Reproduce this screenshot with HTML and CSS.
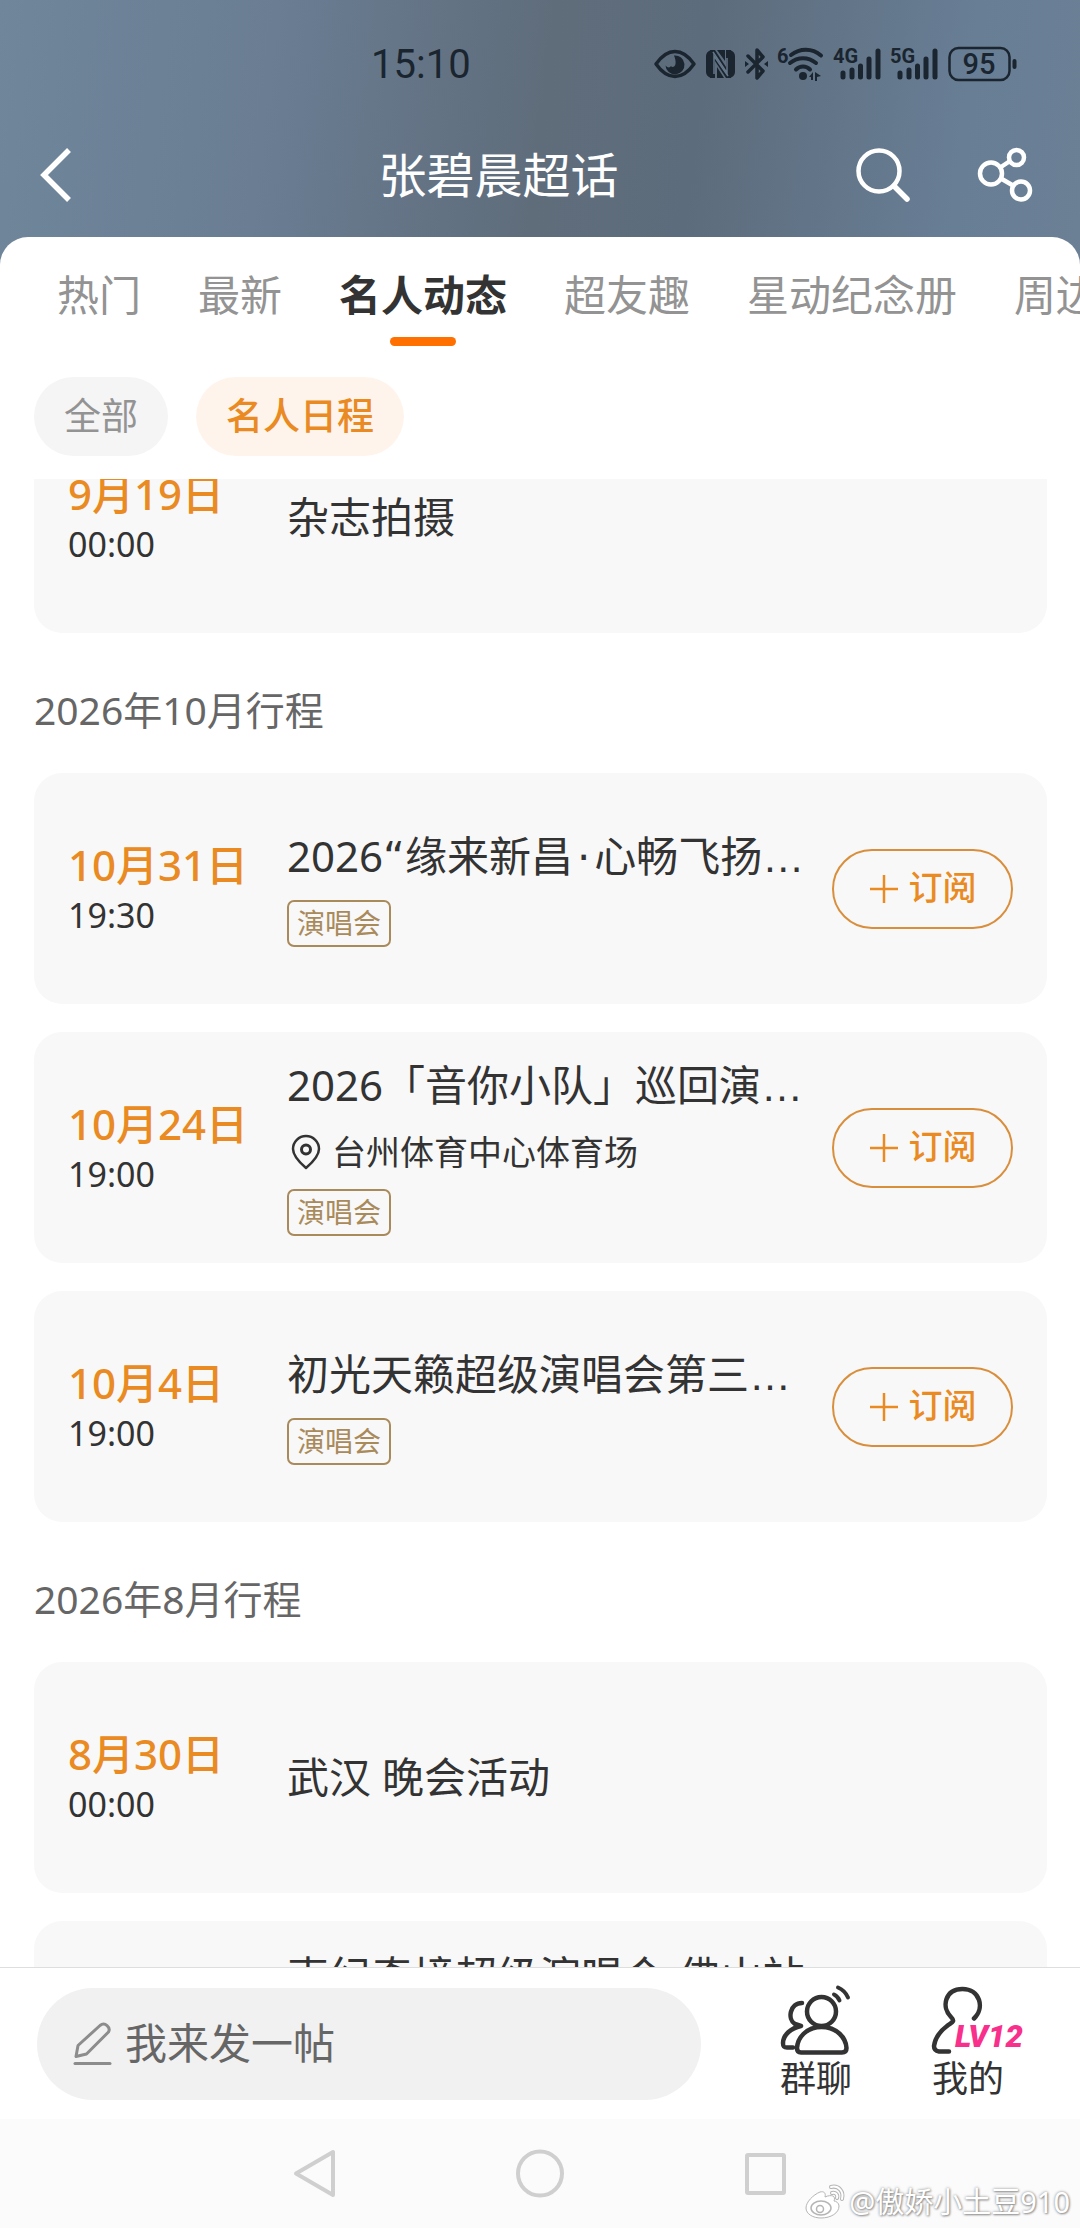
FILE: index.html
```html
<!DOCTYPE html>
<html lang="zh-CN">
<head>
    <meta charset="UTF-8">
    <meta name="viewport" content="width=device-width, initial-scale=1">
    <title>张碧晨超话</title>
    <link rel="stylesheet" href="styles.css">
</head>
<body>
    <div class="page">
        <!-- 顶部：状态栏 + 标题栏 -->
        <header class="top">
            <div class="status-bar">
                <span class="status-time">15:10</span>
                <div class="status-icons">
                    <svg width="42" height="34" viewBox="0 0 42 34">
                        <path d="M2 17C9 7 15 4.500 21 4.500S33 7 40 17C33 27 27 29.500 21 29.500S9 27 2 17Z" fill="none" stroke="#1a252f" stroke-width="3.500" stroke-linejoin="round"/>
                        <path d="M20 8.500a9.500 9.500 0 1 1-8.500 10c2 2.500 4.500 2.500 5.500.5 1 2 4 1 4.500-2 .5-3-.5-6-1.500-8.500Z" fill="#1a252f"/>
                    </svg>
                    <svg width="29" height="34" viewBox="0 0 29 34">
                        <path d="M5 3C2 4 0 6 0 9v16c0 3 2 5 5 6ZM24 3c3 1 5 3 5 6v16c0 3-2 5-5 6Z" fill="#1a252f"/>
                        <path d="M4 3h5l11 17V3h5v28h-5L9 14v17H4Z" fill="#1a252f"/>
                        <path d="M7 5l14 21V11" fill="none" stroke="#66778a" stroke-width="1.500"/>
                        <path d="M22 29L8 9v18" fill="none" stroke="#66778a" stroke-width="1.500"/>
                        <path d="M11 3h8v11ZM11 20l7 11h-7Z" fill="#1a252f"/>
                    </svg>
                    <svg width="23" height="34" viewBox="0 0 23 34">
                        <path d="M3 9l15 15-6 7V3l6 7L3 25" fill="none" stroke="#1a252f" stroke-width="3.500" stroke-linejoin="round" stroke-linecap="round"/>
                        <path d="M0 14l4 3-4 3ZM23 14l-4 3 4 3Z" fill="#1a252f"/>
                    </svg>
                    <svg width="46" height="34" viewBox="0 0 46 34">
                        <text class="net-label" x="-1" y="16">6</text>
                        <g fill="none" stroke="#1a252f" stroke-width="4" stroke-linecap="round">
                            <path d="M13 8C22 1 34 1 43 8.500"/>
                            <path d="M12 16C20 9.500 30 9.500 38 16"/>
                            <path d="M18 22.500c4-4 10-4 14 0"/>
                        </g>
                        <circle cx="25" cy="29" r="4" fill="#1a252f"/>
                        <path d="M31 30l4-5v8h-2v-3ZM37 25l6 4-4 1v4h-2Z" fill="#1a252f"/>
                    </svg>
                    <svg width="47" height="34" viewBox="0 0 47 34">
                        <text class="net-label" x="-1" y="16">4G</text>
                        <path d="M9 26v4M18 23v7M26.500 19v11M35 12v18M44 4v26" fill="none" stroke="#1a252f" stroke-width="5" stroke-linecap="round"/>
                    </svg>
                    <svg width="47" height="34" viewBox="0 0 47 34">
                        <text class="net-label" x="-1" y="16">5G</text>
                        <path d="M9 26v4M18 23v7M26.500 19v11M35 12v18M44 4v26" fill="none" stroke="#1a252f" stroke-width="5" stroke-linecap="round"/>
                    </svg>
                    <svg width="70" height="36" viewBox="0 0 70 36">
                        <rect x="1.500" y="2" width="60" height="32" rx="9" fill="none" stroke="#1a252f" stroke-width="2.500"/>
                        <rect x="64.500" y="13" width="4" height="10" rx="2" fill="#1a252f"/>
                        <text class="battery-label" x="31" y="28" text-anchor="middle">95</text>
                    </svg>
                </div>
            </div>
            <div class="nav-bar">
                <button class="icon-btn" type="button" aria-label="返回">
                    <svg width="32" height="54" viewBox="0 0 32 54"><path d="M29 2L4 27l25 25" fill="none" stroke="#fff" stroke-width="5.500"/></svg>
                </button>
                <h1 class="nav-title">张碧晨超话</h1>
                <button class="icon-btn" type="button" aria-label="搜索">
                    <svg width="54" height="54" viewBox="0 0 54 54" fill="none" stroke="#fff" stroke-linecap="round">
                        <circle cx="23" cy="23" r="20.500" stroke-width="4.500"/>
                        <path d="M38 38l13 13" stroke-width="5.500"/>
                    </svg>
                </button>
                <button class="icon-btn share" type="button" aria-label="分享">
                    <svg width="54" height="54" viewBox="0 0 54 54" fill="none" stroke="#fff" stroke-width="4.500">
                        <circle cx="13" cy="25.500" r="11"/>
                        <circle cx="38.500" cy="9.500" r="7.500"/>
                        <circle cx="43" cy="42.500" r="9"/>
                        <path d="M23 19l9-6M23 30.500l12 7"/>
                    </svg>
                </button>
            </div>
        </header>

        <main class="sheet">
            <!-- 栏目导航 -->
            <nav class="tabs">
                <a class="tab" href="#">热门</a>
                <a class="tab" href="#">最新</a>
                <a class="tab active" href="#">名人动态</a>
                <a class="tab" href="#">超友趣</a>
                <a class="tab" href="#">星动纪念册</a>
                <a class="tab" href="#">周边</a>
            </nav>
            <div class="chips">
                <button class="chip" type="button">全部</button>
                <button class="chip chip-on" type="button">名人日程</button>
            </div>

            <!-- 行程列表 -->
            <div class="list">
                <div class="list-inner">
                    <article class="card">
                        <div class="when">
                            <span class="date">9月19日</span>
                            <span class="time">00:00</span>
                        </div>
                        <div class="info">
                            <h3 class="title">杂志拍摄</h3>
                        </div>
                    </article>

                    <h2 class="month">2026年10月行程</h2>
                    <article class="card">
                        <div class="when">
                            <span class="date">10月31日</span>
                            <span class="time">19:30</span>
                        </div>
                        <div class="info">
                            <h3 class="title">2026<span class="mark">“</span>缘来新昌<span class="mark dot">·</span>心畅飞扬<span class="more">…</span></h3>
                            <span class="tag">演唱会</span>
                        </div>
                        <button class="subscribe" type="button">
                            <svg width="30" height="30" viewBox="0 0 30 30"><path d="M15 1v28M1 15h28" stroke="#ea8a22" stroke-width="2.500"/></svg>
                            <span class="btn-text">订阅</span>
                        </button>
                    </article>
                    <article class="card">
                        <div class="when">
                            <span class="date">10月24日</span>
                            <span class="time">19:00</span>
                        </div>
                        <div class="info">
                            <h3 class="title">2026「音你小队」巡回演<span class="more">…</span></h3>
                            <p class="place">
                                <svg width="38" height="36" viewBox="0 0 38 36" fill="none" stroke="#333" stroke-width="2.500" stroke-linejoin="round">
                                    <path d="M19 34C12 28 6 22 6 15a13 13 0 0 1 26 0c0 7-6 13-13 19Z"/>
                                    <circle cx="19" cy="15.500" r="4.500" stroke-width="3"/>
                                </svg>
                                台州体育中心体育场
                            </p>
                            <span class="tag">演唱会</span>
                        </div>
                        <button class="subscribe" type="button">
                            <svg width="30" height="30" viewBox="0 0 30 30"><path d="M15 1v28M1 15h28" stroke="#ea8a22" stroke-width="2.500"/></svg>
                            <span class="btn-text">订阅</span>
                        </button>
                    </article>
                    <article class="card">
                        <div class="when">
                            <span class="date">10月4日</span>
                            <span class="time">19:00</span>
                        </div>
                        <div class="info">
                            <h3 class="title">初光天籁超级演唱会第三<span class="more">…</span></h3>
                            <span class="tag">演唱会</span>
                        </div>
                        <button class="subscribe" type="button">
                            <svg width="30" height="30" viewBox="0 0 30 30"><path d="M15 1v28M1 15h28" stroke="#ea8a22" stroke-width="2.500"/></svg>
                            <span class="btn-text">订阅</span>
                        </button>
                    </article>

                    <h2 class="month">2026年8月行程</h2>
                    <article class="card">
                        <div class="when">
                            <span class="date">8月30日</span>
                            <span class="time">00:00</span>
                        </div>
                        <div class="info">
                            <h3 class="title">武汉 晚会活动</h3>
                        </div>
                    </article>
                    <article class="card card-tall">
                        <div class="when"></div>
                        <div class="info">
                            <h3 class="title">声纪奇境超级演唱会-佛山站</h3>
                        </div>
                    </article>
                </div>
            </div>
        </main>

        <!-- 底部发帖栏 -->
        <footer class="compose-bar">
            <button class="compose" type="button">
                <svg width="40" height="44" viewBox="0 0 40 44" fill="none" stroke="#8c8c8c" stroke-width="3" stroke-linejoin="round" stroke-linecap="round">
                    <path d="M3 34.500l2-11L27 3.500c5-4 11 2 8.500 6.500L13.500 32Z"/>
                    <path d="M2 41.500h35"/>
                </svg>
                <span class="btn-text">我来发一帖</span>
            </button>
            <a class="action" href="#">
                <svg width="72" height="70" viewBox="0 0 72 70" fill="none" stroke="#333" stroke-width="4.500" stroke-linecap="round" stroke-linejoin="round">
                    <circle cx="41.500" cy="26.500" r="14.500"/>
                    <path d="M41.500 42C26 42 17.500 53 17 63c0 3.500 1.500 4.500 4 4.500h41c3 0 4.500-1.500 4.500-4.500C66 53 57 42 41.500 42Z"/>
                    <path d="M22 18C10 18 7 34 15 39c3 1 6 2 6 2C11 43 3 50 3 58c0 4 1 4.500 4 4.500h6"/>
                    <path d="M54 9.500q4 2 5.500 6M58 2.500q7 3 10 10" stroke-width="4"/>
                </svg>
                群聊
            </a>
            <a class="action" href="#">
                <svg width="72" height="70" viewBox="0 0 72 70" fill="none" stroke="#333" stroke-width="4.500" stroke-linecap="round" stroke-linejoin="round">
                    <path d="M42 33.500C53 23 48 4 30.500 4 13 4 9 22 19 32c5 5 0 5.500-4 9C7 47 3 54 2 61c0 4 2 5 5 5.500h10"/>
                </svg>
                <span class="level">LV12</span>
                我的
            </a>
        </footer>

        <!-- 系统导航键 -->
        <div class="system-nav">
            <svg width="50" height="50" viewBox="0 0 50 50"><path d="M43 4v43L6 25.500Z" fill="none" stroke="#cfcfcf" stroke-width="4" stroke-linejoin="round"/></svg>
            <svg width="50" height="50" viewBox="0 0 50 50"><circle cx="25" cy="25.500" r="22" fill="none" stroke="#cfcfcf" stroke-width="4"/></svg>
            <svg width="50" height="50" viewBox="0 0 50 50"><rect x="7" y="7" width="37" height="38" rx="1" fill="none" stroke="#cfcfcf" stroke-width="4"/></svg>
            <div class="watermark">
                <svg width="40" height="36" viewBox="0 0 40 36">
                    <path d="M15 8C8 11 1 18 1 24c0 6 7 10 15 10 10 0 18-5 18-12 0-3-3-5-5-5 2-5-2-7-9-4 1-4-1-6-5-5Z" fill="#fff" stroke="#b5b5b5"/>
                    <ellipse cx="16" cy="24" rx="10" ry="7" fill="none" stroke="#b5b5b5" stroke-width="1.500"/>
                    <circle cx="15" cy="25" r="3.500" fill="none" stroke="#b5b5b5" stroke-width="1.500"/>
                    <path d="M26 3c8-2 13 5 11 12M27 9c4-1 6 2 5 5" fill="none" stroke="#b5b5b5" stroke-width="4" stroke-linecap="round"/>
                    <path d="M26 3c8-2 13 5 11 12M27 9c4-1 6 2 5 5" fill="none" stroke="#fff" stroke-width="2" stroke-linecap="round"/>
                </svg>
                @傲娇小土豆910
            </div>
        </div>
    </div>
</body>
</html>
```
FILE: styles.css
```css
/* 全局 */
* {
    box-sizing: border-box;
}

body {
    margin: 0;
    font-family: "Noto Sans", "Noto Sans CJK SC", sans-serif;
    color: #333;
    background: #fff;
}

h1, h2, h3, p {
    margin: 0;
    font-weight: 400;
}

button {
    font: inherit;
    border: none;
    background: none;
    padding: 0;
    cursor: pointer;
}

a {
    color: inherit;
    text-decoration: none;
}

svg {
    display: block;
    flex: none;
    overflow: visible;
}

.page {
    display: flex;
    flex-direction: column;
    height: 100vh;
    overflow: hidden;
}

/* 顶部 */
.top {
    background: linear-gradient(97deg, #6f869b 0%, #6a7d93 25%, #5f6d7b 50%, #5d6c7c 64%, #687e95 88%, #6b8095 100%);
    padding-bottom: 28px;
}

.status-bar {
    display: flex;
    align-items: center;
    justify-content: space-between;
    height: 113px;
    padding: 15px 62px 0 371px;
}

.status-time {
    font-family: Roboto, sans-serif;
    font-size: 40px;
    font-weight: 400;
    color: #1a252f;
}

.status-icons {
    display: flex;
    align-items: center;
    gap: 10px;
}

.net-label {
    font-family: Roboto, sans-serif;
    font-size: 20px;
    font-weight: 700;
    fill: #1a252f;
}

.battery-label {
    font-family: Roboto, sans-serif;
    font-size: 29px;
    font-weight: 500;
    fill: #1a252f;
}

.nav-bar {
    display: flex;
    align-items: center;
    height: 124px;
    padding: 0 48px 0 40px;
}

.nav-title {
    flex: 1;
    padding: 0 0 7px 69px;
    text-align: center;
    font-size: 48px;
    color: #fff;
}

.share {
    margin-left: 68px;
}

/* 白色内容区 */
.sheet {
    flex: 1;
    min-height: 0;
    display: flex;
    flex-direction: column;
    margin-top: -28px;
    border-radius: 28px 28px 0 0;
    background: #fff;
}

.tabs {
    display: flex;
    gap: 57px;
    padding: 28px 0 0 57px;
    overflow: hidden;
    white-space: nowrap;
    font-size: 42px;
    line-height: 60px;
    color: #939393;
}

.tab {
    flex: none;
    padding-bottom: 21px;
}

.tab.active {
    position: relative;
    font-weight: 700;
    color: #333;
}

.tab.active::after {
    content: "";
    position: absolute;
    left: 50%;
    bottom: 0;
    width: 66px;
    height: 9px;
    margin-left: -33px;
    border-radius: 5px;
    background: #ff7000;
}

.chips {
    display: flex;
    gap: 28px;
    padding: 31px 34px 23px;
}

.chip {
    height: 79px;
    padding: 0 30px 6px;
    border-radius: 40px;
    font-size: 37px;
    color: #939393;
    background: #f5f5f5;
}

.chip-on {
    font-weight: 500;
    color: #ea8a22;
    background: #fff4ec;
}

/* 列表 */
.list {
    flex: 1;
    min-height: 0;
    overflow: hidden;
    padding: 0 33px 0 34px;
}

/* 列表已向上滚动一段 */
.list-inner {
    margin-top: -77px;
}

.month {
    height: 140px;
    line-height: 154px;
    font-size: 39px;
    color: #666;
}

.card {
    display: flex;
    align-items: center;
    min-height: 231px;
    padding: 20px 34px;
    border-radius: 28px;
    background: #f8f8f8;
}

.card + .card {
    margin-top: 28px;
}

.card-tall {
    align-items: flex-start;
    padding-top: 27px;
}

.when {
    flex: none;
    display: flex;
    flex-direction: column;
    width: 219px;
    padding-top: 2px;
    line-height: 50px;
}

.date {
    font-size: 42px;
    font-weight: 500;
    color: #ea8a22;
}

.time {
    font-size: 34px;
}

.info {
    flex: 1;
    min-width: 0;
    display: flex;
    flex-direction: column;
    align-items: flex-start;
    gap: 14px;
    padding-bottom: 2px;
}

.title {
    font-size: 42px;
    line-height: 56px;
    white-space: nowrap;
}

.mark {
    font-family: "DejaVu Sans", sans-serif;
}

.dot {
    padding: 0 4px;
}

/* 省略号用等距的三点 */
.more {
    font-family: "Liberation Sans", sans-serif;
}

.place {
    display: flex;
    align-items: center;
    gap: 7px;
    font-size: 34px;
    line-height: 46px;
}

.tag {
    padding: 0 8px;
    border: 2px solid #a98a5b;
    border-radius: 7px;
    font-size: 28px;
    line-height: 43px;
    color: #a98a5b;
}

.subscribe {
    flex: none;
    display: flex;
    align-items: center;
    justify-content: center;
    gap: 10px;
    width: 181px;
    height: 80px;
    border: 2px solid #d98e3c;
    border-radius: 40px;
    font-size: 34px;
    font-weight: 500;
    color: #ea8a22;
}

.btn-text {
    padding-bottom: 6px;
}

/* 底部 */
.compose-bar {
    display: flex;
    align-items: center;
    gap: 68px;
    height: 152px;
    padding: 0 70px 0 37px;
    border-top: 1px solid #dedede;
    background: #fff;
}

.compose {
    flex: 1;
    display: flex;
    align-items: center;
    gap: 12px;
    height: 112px;
    margin-right: 5px;
    padding-left: 36px;
    border-radius: 56px;
    font-size: 42px;
    color: #666;
    background: #f1f1f1;
}

.action {
    position: relative;
    display: flex;
    flex-direction: column;
    align-items: center;
    width: 84px;
    font-size: 36px;
    line-height: 48px;
}

/* 等级角标 */
.level {
    position: absolute;
    left: 29px;
    top: 32px;
    font-family: Roboto, sans-serif;
    font-size: 31px;
    font-style: italic;
    font-weight: 900;
    line-height: 40px;
    color: #f8308c;
}

.system-nav {
    position: relative;
    display: flex;
    justify-content: center;
    gap: 175px;
    height: 109px;
    padding-top: 29px;
    background: #fbfbfb;
}

.watermark {
    position: absolute;
    right: 10px;
    bottom: 6px;
    display: flex;
    align-items: center;
    gap: 4px;
    font-size: 29px;
    line-height: 40px;
    color: #fff;
    text-shadow: 0 0 3px #888, 1px 1px 2px #999;
}
```
